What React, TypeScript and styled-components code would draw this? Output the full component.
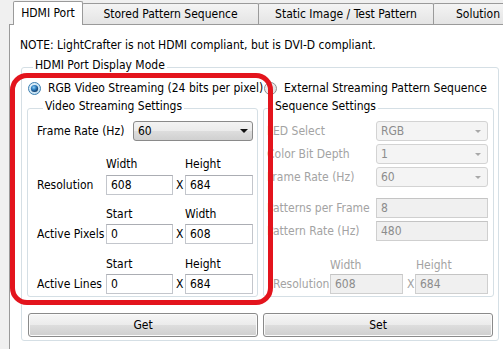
import React from "react";
import styled, { createGlobalStyle } from "styled-components";

const GlobalStyle = createGlobalStyle`
  html, body {
    margin: 0;
    padding: 0;
    background: #f0f0f0;
  }
  body {
    font-family: "DejaVu Sans Condensed", "DejaVu Sans", sans-serif;
    font-size: 12px;
    color: #000;
  }
`;

const Window = styled.div`
  position: relative;
  width: 503px;
  height: 349px;
  overflow: hidden;
  background: #f0f0f0;
`;

const TabBar = styled.div`
  display: flex;
  align-items: flex-end;
  height: 24px;
  padding-left: 13px;
`;

const Tab = styled.div<{ $active?: boolean; $w: number }>`
  flex: none;
  box-sizing: border-box;
  width: ${(p) => p.$w}px;
  height: ${(p) => (p.$active ? 24 : 21)}px;
  margin-bottom: ${(p) => (p.$active ? -1 : 0)}px;
  margin-left: -1px;
  position: relative;
  z-index: ${(p) => (p.$active ? 2 : 1)};
  display: flex;
  align-items: center;
  justify-content: center;
  padding-bottom: ${(p) => (p.$active ? 2 : 0)}px;
  border: 1px solid #9a9a9a;
  border-bottom: none;
  border-radius: 2px 2px 0 0;
  background: ${(p) =>
    p.$active ? "#fff" : "linear-gradient(#f4f4f4, #e4e4e4)"};
  white-space: nowrap;

  &:first-child {
    margin-left: 0;
  }
`;

const Pane = styled.div`
  box-sizing: border-box;
  width: 600px;
  height: 400px;
  margin-left: 9px;
  padding-left: 10px;
  background: #fff;
  border: 1px solid #9a9a9a;
`;

const Note = styled.div`
  margin-top: 14px;
  line-height: 13px;
  white-space: nowrap;
`;

const GroupBox = styled.fieldset<{ $w: number }>`
  box-sizing: border-box;
  width: ${(p) => p.$w}px;
  margin: 0;
  border: 1px solid #d5dfe5;
  border-radius: 3px;
  min-width: 0;
`;

const OuterBox = styled(GroupBox)`
  margin: 7px 0 0 1px;
  padding: 6px 4px 3px 5px;
`;

const InnerBox = styled(GroupBox)<{ $pl: number }>`
  padding: 5px 0 2px ${(p) => p.$pl}px;
`;

const Legend = styled.legend`
  margin-left: 6px;
  padding: 0 2px 3px;
  line-height: 13px;
  white-space: nowrap;
`;

const Columns = styled.div`
  display: grid;
  grid-template-columns: 231px 231px;
  column-gap: 5px;
`;

const RadioRow = styled.div`
  display: flex;
  align-items: center;
  gap: 7px;
  height: 14px;
  margin-left: 1px;
  margin-bottom: 5px;
  white-space: nowrap;
  svg {
    flex: none;
  }
`;

const Row = styled.div<{ $mt: number; $h?: number }>`
  display: flex;
  align-items: center;
  height: ${(p) => p.$h ?? 20}px;
  margin-top: ${(p) => p.$mt}px;
  white-space: nowrap;
`;

const Label = styled.div<{ $w?: number; $off?: boolean; $pl?: number }>`
  flex: none;
  box-sizing: border-box;
  width: ${(p) => (p.$w ? `${p.$w}px` : "auto")};
  padding-left: ${(p) => p.$pl ?? 0}px;
  color: ${(p) => (p.$off ? "#a3a3a3" : "#000")};
  line-height: 13px;
`;

const TextBox = styled.div<{ $w: number; $off?: boolean }>`
  flex: none;
  box-sizing: border-box;
  width: ${(p) => p.$w}px;
  height: 20px;
  padding-left: 4px;
  display: flex;
  align-items: center;
  border: 1px solid ${(p) => (p.$off ? "#cfcfcf" : "#c3c6cc")};
  border-top-color: ${(p) => (p.$off ? "#c4c4c4" : "#abadb3")};
  background: ${(p) => (p.$off ? "#f0f0f0" : "#fff")};
  color: ${(p) => (p.$off ? "#8c8c8c" : "#000")};
`;

const Combo = styled.div<{ $w: number; $off?: boolean }>`
  flex: none;
  box-sizing: border-box;
  width: ${(p) => p.$w}px;
  height: 20px;
  padding: 0 4px 0 4px;
  display: flex;
  align-items: center;
  justify-content: space-between;
  border: 1px solid ${(p) => (p.$off ? "#d3d3d3" : "#8a8a8a")};
  border-radius: 3px;
  background: ${(p) =>
    p.$off ? "#f4f4f4" : "linear-gradient(#f3f3f3 0%, #ebebeb 50%, #dddddd 51%, #d0d0d0 100%)"};
  color: ${(p) => (p.$off ? "#8c8c8c" : "#000")};

  &::after {
    content: "";
    border-left: ${(p) => (p.$off ? 3 : 4)}px solid transparent;
    border-right: ${(p) => (p.$off ? 3 : 4)}px solid transparent;
    border-top: ${(p) => (p.$off ? 3 : 4)}px solid ${(p) => (p.$off ? "#a8a8a8" : "#111")};
    margin-right: ${(p) => (p.$off ? 2 : 0)}px;
  }
`;

const Times = styled.div<{ $off?: boolean; $pl: number; $w: number }>`
  flex: none;
  box-sizing: border-box;
  width: ${(p) => p.$w}px;
  padding-left: ${(p) => p.$pl}px;
  color: ${(p) => (p.$off ? "#a3a3a3" : "#000")};
`;

const ButtonRow = styled.div`
  display: grid;
  grid-template-columns: 231px 231px;
  column-gap: 5px;
  margin-top: 16px;
`;

const Button = styled.div<{ $ml: number }>`
  box-sizing: border-box;
  width: 230px;
  height: 24px;
  margin-left: ${(p) => p.$ml}px;
  display: flex;
  align-items: center;
  justify-content: center;
  border: 1px solid #8a8a8a;
  border-radius: 3px;
  background: linear-gradient(#f6f6f6 0%, #ebebeb 50%, #dddddd 51%, #cfcfcf 100%);
  box-shadow: inset 0 0 0 1px #fbfbfb;
`;

const Highlight = styled.div`
  position: absolute;
  left: 10px;
  top: 73px;
  width: 263px;
  height: 232px;
  box-sizing: border-box;
  border: 5px solid #e3141d;
  border-radius: 17px;
  pointer-events: none;
`;

const Radio = ({ checked }: { checked?: boolean }) => (
  <svg width="13" height="13" viewBox="0 0 13 13">
    <defs>
      <linearGradient id={checked ? "rbOn" : "rbOff"} x1="0" y1="0" x2="1" y2="1">
        <stop offset="0" stopColor={checked ? "#e6f3fb" : "#f4f4f4"} />
        <stop offset="1" stopColor={checked ? "#b9d9ee" : "#dedede"} />
      </linearGradient>
      <radialGradient id="rbDot" cx="0.4" cy="0.35" r="0.7">
        <stop offset="0" stopColor="#8fd0f5" />
        <stop offset="0.45" stopColor="#2e7fc0" />
        <stop offset="1" stopColor="#0b2f5a" />
      </radialGradient>
    </defs>
    <circle
      cx="6.5"
      cy="6.5"
      r="6"
      fill={`url(#${checked ? "rbOn" : "rbOff"})`}
      stroke={checked ? "#3c7fb1" : "#8e8f8f"}
    />
    {checked && <circle cx="6.5" cy="6.5" r="3.6" fill="url(#rbDot)" />}
  </svg>
);

const App = () => {
  return (
    <Window>
      <GlobalStyle />
      <TabBar>
        <Tab $active $w={70}>HDMI Port</Tab>
        <Tab $w={177}>Stored Pattern Sequence</Tab>
        <Tab $w={176}>Static Image / Test Pattern</Tab>
        <Tab $w={90}>Solution</Tab>
      </TabBar>
      <Pane>
        <Note>NOTE: LightCrafter is not HDMI compliant, but is DVI-D compliant.</Note>
        <OuterBox $w={478}>
          <Legend>HDMI Port Display Mode</Legend>
          <Columns>
            <div>
              <RadioRow>
                <Radio checked />
                RGB Video Streaming (24 bits per pixel)
              </RadioRow>
              <InnerBox $w={231} $pl={9}>
                <Legend>Video Streaming Settings</Legend>
                <Row $mt={0}>
                  <Label $w={96}>Frame Rate (Hz)</Label>
                  <Combo $w={120}>60</Combo>
                </Row>
                <Row $mt={17} $h={13}>
                  <Label $w={69} />
                  <Label $w={79}>Width</Label>
                  <Label>Height</Label>
                </Row>
                <Row $mt={4}>
                  <Label $w={69}>Resolution</Label>
                  <TextBox $w={67}>608</TextBox>
                  <Times $w={12} $pl={3}>X</Times>
                  <TextBox $w={68}>684</TextBox>
                </Row>
                <Row $mt={13} $h={13}>
                  <Label $w={69} />
                  <Label $w={79}>Start</Label>
                  <Label>Width</Label>
                </Row>
                <Row $mt={3}>
                  <Label $w={69}>Active Pixels</Label>
                  <TextBox $w={67}>0</TextBox>
                  <Times $w={12} $pl={3}>X</Times>
                  <TextBox $w={68}>608</TextBox>
                </Row>
                <Row $mt={14} $h={13}>
                  <Label $w={69} />
                  <Label $w={79}>Start</Label>
                  <Label>Height</Label>
                </Row>
                <Row $mt={3}>
                  <Label $w={69}>Active Lines</Label>
                  <TextBox $w={67}>0</TextBox>
                  <Times $w={12} $pl={3}>X</Times>
                  <TextBox $w={68}>684</TextBox>
                </Row>
              </InnerBox>
            </div>
            <div>
              <RadioRow>
                <Radio />
                External Streaming Pattern Sequence
              </RadioRow>
              <InnerBox $w={231} $pl={3}>
                <Legend>Sequence Settings</Legend>
                <Row $mt={0}>
                  <Label $w={109} $off>LED Select</Label>
                  <Combo $w={112} $off>RGB</Combo>
                </Row>
                <Row $mt={3}>
                  <Label $w={109} $off>Color Bit Depth</Label>
                  <Combo $w={112} $off>1</Combo>
                </Row>
                <Row $mt={3}>
                  <Label $w={109} $off>Frame Rate (Hz)</Label>
                  <Combo $w={112} $off>60</Combo>
                </Row>
                <Row $mt={11}>
                  <Label $w={109} $off>Patterns per Frame</Label>
                  <TextBox $w={112} $off>8</TextBox>
                </Row>
                <Row $mt={3}>
                  <Label $w={109} $off>Pattern Rate (Hz)</Label>
                  <TextBox $w={112} $off>480</TextBox>
                </Row>
                <Row $mt={18} $h={13}>
                  <Label $w={63} />
                  <Label $w={86} $off>Width</Label>
                  <Label $off>Height</Label>
                </Row>
                <Row $mt={2}>
                  <Label $w={63} $pl={6} $off>Resolution</Label>
                  <TextBox $w={73} $off>608</TextBox>
                  <Times $w={12} $pl={4} $off>X</Times>
                  <TextBox $w={73} $off>684</TextBox>
                </Row>
              </InnerBox>
            </div>
          </Columns>
          <ButtonRow>
            <Button $ml={1}>Get</Button>
            <Button $ml={0}>Set</Button>
          </ButtonRow>
        </OuterBox>
      </Pane>
      <Highlight />
    </Window>
  );
};

export default App;
